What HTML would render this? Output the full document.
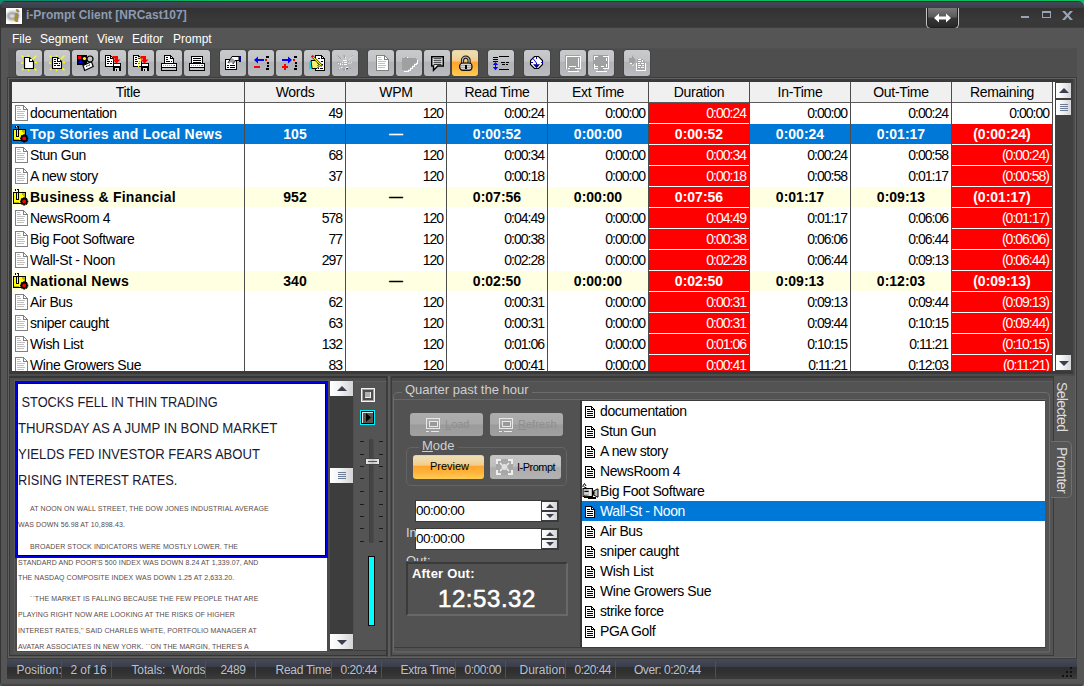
<!DOCTYPE html>
<html><head><meta charset="utf-8">
<style>
*{box-sizing:border-box;margin:0;padding:0}
html,body{width:1084px;height:686px;overflow:hidden;background:linear-gradient(90deg,#0e8a6a 0,#0e8a6a 8%,#0abf5e 20%,#0abf5e 100%);font-family:"Liberation Sans",sans-serif;font-size:13px}
.a{position:absolute}
i{font-style:normal}
#win{left:0;top:0;width:1084px;height:686px;background:#555;clip-path:inset(1px 0 0 0 round 6px 6px 4px 4px);overflow:hidden}
#tb{left:0;top:0;width:1084px;height:28px;background:linear-gradient(#2e2832 0,#2e2832 2px,#444856 2px,#3c3f4b 7.500px,#313131 8px,#393939 20px,#383838 27px,#484848 28px)}
#tbtxt{left:26px;top:8px;font-weight:bold;font-size:12px;color:#8c9bb4;white-space:nowrap}
#menu{left:7px;top:28px;width:1070px;height:20px;background:#555}
#menu span{position:absolute;top:4px;color:#fff;font-size:12px}
#tool{left:8px;top:48px;width:1069px;height:29px;background:linear-gradient(#525252 0,#4e4e4e 1px,#4e4e4e 100%)}
.btn{position:absolute;top:50px;width:26px;height:26px;border-radius:3px;box-shadow:0 0 0 1px #454545;background:linear-gradient(#c8cacc 0,#c2c3c6 42%,#b3b4b7 48%,#b6b7ba 75%,#bcbdc0 100%)}
.btn.dis{background:linear-gradient(#c8cacc 0,#c2c3c6 42%,#b3b4b7 48%,#b6b7ba 75%,#bcbdc0 100%)}
.btn.on{background:linear-gradient(#dccfa8 0,#eedcb2 6%,#f0d7a2 25%,#f3cb88 42%,#ffa52c 48%,#ffb238 70%,#ffcd58 100%)}
.btn svg{position:absolute;left:5px;top:5px}
/* table */
#tframe{left:9px;top:79px;width:1066px;height:295px;background:#3a3a3a}
#tbl{left:12px;top:82px;width:1041px;height:289px;overflow:hidden;background:#fff}
.th{top:0;height:20px;line-height:20px;text-align:center;color:#000;font-size:14px;letter-spacing:-.3px}
.tr{left:0;width:1041px;height:20px;color:#000;font-size:14px}
.tr.sel{color:#fff}
.tr.b{font-weight:bold}
.tr.b .tt{letter-spacing:.25px}
.tr.b .td{letter-spacing:0}
.tt{left:18px;top:0;line-height:20px;white-space:nowrap;letter-spacing:-.4px}
.td{top:0;height:20px;line-height:20px;text-align:right;padding-right:3px;white-space:nowrap;letter-spacing:-1px}
.tr.b .td{text-align:center;padding-right:0}
.td.red{background:#f00;color:#fff}
i.doc{position:absolute;left:3px;top:2px;width:13px;height:16px}
i.seg{position:absolute;left:1px;top:2px;width:16px;height:17px}
.big{left:1px;font-size:14px;line-height:18px;white-space:nowrap;color:#1a1a30;transform:scaleX(.935);transform-origin:0 0}
.sm{font-size:7px;line-height:10px;white-space:nowrap;color:#5a4a4a;letter-spacing:.1px}
.sbb{background:linear-gradient(90deg,#fff 0,#f4f4f4 40%,#d4d4d8 100%)}
.sbb i{position:absolute;left:50%;top:50%}
i.up{margin:-3px 0 0 -5px;border:5px solid transparent;border-top:0;border-bottom:5px solid #3a3f50}
i.dn{margin:-2px 0 0 -5px;border:5px solid transparent;border-bottom:0;border-top:5px solid #3a3f50}
i.up.s{margin:-2px 0 0 -4px;border-width:0 4px 4px 4px}
i.dn.s{margin:-2px 0 0 -4px;border-width:4px 4px 0 4px}
i.grip{margin:-4px 0 0 -4px;width:8px;height:7px;background:repeating-linear-gradient(#6c7c96 0,#6c7c96 1px,transparent 1px,transparent 2px)}
.gb{font-size:11px;border-radius:3px;background:linear-gradient(#c4c4c4 0,#bfbfbf 46%,#adadad 54%,#b3b3b3 100%);white-space:nowrap}
.gb.dis{background:linear-gradient(#adadad 0,#a9a9a9 46%,#9b9b9b 54%,#a0a0a0 100%)}
.gb.on{background:linear-gradient(#dccfa8 0,#eedcb2 6%,#f0d7a2 25%,#f3cb88 42%,#ffa52c 48%,#ffb238 70%,#ffcd58 100%)}
.vt{writing-mode:vertical-rl;color:#dcdcdc;font-size:14px;white-space:nowrap;line-height:16px}
#stat span{color:#b9c1cf;font-size:12px;white-space:nowrap}

</style></head><body>
<div id="win" class="a">
<div id="tb" class="a"></div>
<div class="a" style="left:0;top:0;width:1px;height:686px;background:#343434"></div>
<div class="a" style="left:6px;top:8px;width:16px;height:16px;background:radial-gradient(ellipse 7px 5px at 6px 8px,#e8e8e8 0,#a8a8a8 55%,#d0d0d0 100%),#fff;overflow:hidden;box-shadow:0 0 1px #222"><div class="a" style="left:0;top:0;width:16px;height:16px;background:radial-gradient(ellipse 9px 7px at 7px 8px,rgba(255,255,255,0) 55%,#fff 100%)"></div><span class="a" style="left:8px;top:-2px;font-family:'Liberation Serif',serif;font-weight:bold;font-style:italic;font-size:16px;line-height:20px;color:#a48c2c;text-shadow:1px 1px 1px #777">i</span></div>
<div id="tbtxt" class="a">i-Prompt Client [NRCast107]</div>
<div class="a" style="left:926px;top:8px;width:33px;height:21px;border:1px solid #c4c4c4;border-top:none;border-radius:0 0 5px 5px;background:#202020"><div class="a" style="left:1px;top:0;width:29px;height:19px;border-radius:0 0 3px 3px;background:linear-gradient(#787878 0,#5c5c5c 45%,#363636 55%,#282828 100%)"></div><svg class="a" style="left:7px;top:5px" width="17" height="10" viewBox="0 0 17 10"><path d="M0 5l5-4.500v3h7v-3l5 4.500-5 4.500v-3h-7v3z" fill="#fff"/></svg></div>
<div class="a" style="left:1021px;top:16px;width:8px;height:2px;background:#9aa3b4"></div>
<div class="a" style="left:1042px;top:11px;width:9px;height:7px;border:1px solid #9aa3b4;border-top-width:2px"></div>
<svg class="a" style="left:1062px;top:11px" width="11" height="9" viewBox="0 0 11 9"><path d="M0 0h3l2.500 3 2.500-3h3l-4 4.500 4 4.500h-3l-2.500-3-2.500 3h-3l4-4.500z" fill="#9aa3b4"/></svg>
<div id="menu" class="a"><span style="left:5px">File</span><span style="left:33px">Segment</span><span style="left:90px">View</span><span style="left:125px">Editor</span><span style="left:166px">Prompt</span></div>
<div id="tool" class="a"></div>

<div class="btn" style="left:16px"><svg width="17" height="17" viewBox="0 0 17 17" shape-rendering="crispEdges"><path d="M0.500 0.500l2.500 2.500M15.500 0.500l-4.500 4.500M1 15l2-2M15.500 15.500l-2.500-2.500M7 0l1 2M0 8h2.500M13.500 7.500h2.500M7 14l1 2" stroke="#ffff00" stroke-width="1.300" shape-rendering="geometricPrecision"/><path d="M3.500 2.500h5l4 4v7h-9z" fill="#fff" stroke="#000" stroke-width="1.200" shape-rendering="geometricPrecision"/><path d="M8.500 2.500v4h4" fill="none" stroke="#000"/><rect x="9" y="4" width="2" height="2" fill="#fff"/></svg></div>
<div class="btn" style="left:44px"><svg width="17" height="17" viewBox="0 0 17 17" shape-rendering="crispEdges"><path d="M0.500 0.500l2.500 2.500M15.500 0.500l-4.500 4.500M1 15l2-2M15.500 15.500l-2.500-2.500M7 0l1 2M0 8h2.500M13.500 7.500h2.500M7 14l1 2" stroke="#ffff00" stroke-width="1.300" shape-rendering="geometricPrecision"/><path d="M3.500 2.500h5l4 4v7h-9z" fill="#fff" stroke="#000" stroke-width="1.200" shape-rendering="geometricPrecision"/><path d="M8.500 2.500v4h4" fill="none" stroke="#000"/><rect x="9" y="4" width="2" height="2" fill="#fff"/><path d="M5 4.500h2M5 6.500h2M5 8.500h4M10 8.500h1M5 10.500h2M8 10.500h3" stroke="#000"/></svg></div>
<div class="btn" style="left:72px"><svg width="17" height="17" viewBox="0 0 17 17" shape-rendering="crispEdges"><rect x="0" y="0" width="10" height="10" fill="#000"/><rect x="1" y="1" width="3" height="3" fill="#f00"/><circle cx="7.500" cy="3.500" r="1.600" fill="#ff0" shape-rendering="geometricPrecision"/><path d="M1 8l2.500-3 2.500 3z" fill="#00f" shape-rendering="geometricPrecision"/><circle cx="13" cy="4" r="3" fill="none" stroke="#000" stroke-width="1.200" shape-rendering="geometricPrecision"/><path d="M6 10.500l8.500-3.700 1.700 4.700-8.500 4z" fill="#fff" stroke="#000" stroke-width="1.200" shape-rendering="geometricPrecision"/><path d="M9 11.500l1.500-.7M11.500 10.500l1.500-.7" stroke="#000" shape-rendering="geometricPrecision"/></svg></div>
<div class="btn" style="left:100px"><svg width="17" height="17" viewBox="0 0 17 17" shape-rendering="crispEdges"><path d="M0.500 0.500h5l3 3v8h-8z" fill="#fff" stroke="#000" stroke-width="1.200"/><path d="M5.500 0.500v3h3" fill="none" stroke="#000"/><path d="M2 2.500h2M2 4.500h2M2 6.500h3M6 6.500h1M2 8.500h2M5 8.500h2" stroke="#000"/><path d="M7.500 1h5.500v3.500h2.500l-4 4-4-4h2.500v-1h-2.500z" fill="#f00" shape-rendering="geometricPrecision"/><rect x="8" y="8" width="8" height="8" fill="#000"/><rect x="9" y="8" width="6" height="1" fill="#00f"/><rect x="9" y="9" width="6" height="2" fill="#fff"/><rect x="10" y="13" width="4" height="3" fill="#ddd"/><rect x="11" y="14" width="1" height="2" fill="#000"/></svg></div>
<div class="btn" style="left:128px"><svg width="17" height="17" viewBox="0 0 17 17" shape-rendering="crispEdges"><path d="M0.500 0.500h5l3 3v8h-8z" fill="#fff" stroke="#000" stroke-width="1.200"/><path d="M5.500 0.500v3h3" fill="none" stroke="#000"/><path d="M2 2.500h2M2 4.500h2M2 6.500h3M6 6.500h1M2 8.500h2M5 8.500h2" stroke="#000"/><path d="M4 3.500q2.500-2 4 0t-2 4v2" fill="none" stroke="#ff0" stroke-width="1.200" shape-rendering="geometricPrecision"/><rect x="5" y="11" width="1" height="1" fill="#ff0"/><path d="M7.500 1h5.500v3.500h2.500l-4 4-4-4h2.500v-1h-2.500z" fill="#f00" shape-rendering="geometricPrecision"/><rect x="8" y="8" width="8" height="8" fill="#000"/><rect x="9" y="8" width="6" height="1" fill="#00f"/><rect x="9" y="9" width="6" height="2" fill="#fff"/><rect x="10" y="13" width="4" height="3" fill="#ddd"/><rect x="11" y="14" width="1" height="2" fill="#000"/></svg></div>
<div class="btn" style="left:156px"><svg width="17" height="17" viewBox="0 0 17 17" shape-rendering="crispEdges"><path d="M3.500 0.500h6l3 3v5h-9z" fill="#fff" stroke="#000" stroke-width="1.200"/><path d="M9.500 0.500v3h3" fill="none" stroke="#000"/><path d="M5 2.500h2M5 4.500h2M5 6.500h4M10 6.500h1" stroke="#000"/><rect x="0.500" y="8.500" width="15" height="7" fill="#fff" stroke="#000"/><rect x="1" y="9" width="14" height="3" fill="#fff"/><path d="M1.500 10.500h11" stroke="#999" stroke-dasharray="1 1"/><rect x="13" y="10" width="1" height="1" fill="#f00"/><path d="M1 12.500h14" stroke="#000"/><rect x="1" y="13" width="14" height="2" fill="#c8c8c8"/></svg></div>
<div class="btn" style="left:184px"><svg width="17" height="17" viewBox="0 0 17 17" shape-rendering="crispEdges"><path d="M2.500 1.500h11v7h-11z" fill="#fff" stroke="#000" stroke-width="1.200"/><path d="M4 3.500h8M4 5.500h8" stroke="#000"/><path d="M4 7.500h8" stroke="#000"/><rect x="0.500" y="8.500" width="15" height="7" fill="#fff" stroke="#000"/><rect x="1" y="9" width="14" height="3" fill="#fff"/><path d="M1.500 10.500h11" stroke="#999" stroke-dasharray="1 1"/><rect x="13" y="10" width="1" height="1" fill="#f00"/><path d="M1 12.500h14" stroke="#000"/><rect x="1" y="13" width="14" height="2" fill="#c8c8c8"/></svg></div>
<div class="btn" style="left:220px"><svg width="17" height="17" viewBox="0 0 17 17" shape-rendering="crispEdges"><path d="M0.500 4.500h11v10h-11z" fill="#fff" stroke="#000" stroke-width="1.300"/><path d="M2 10.500h2M5 10.500h5M2 12.500h2M5 12.500h5" stroke="#000"/><path d="M3 8l4-6.500h7v4h-4l-2 3.500" fill="#fff" stroke="#000" shape-rendering="geometricPrecision"/><path d="M3 8l4-5 4 3.500-3 2.500-2-2-1.500 1.500z" fill="#777" opacity=".75" shape-rendering="geometricPrecision"/><rect x="14" y="1" width="2" height="6" fill="#00008b"/></svg></div>
<div class="btn" style="left:248px"><svg width="17" height="17" viewBox="0 0 17 17" shape-rendering="crispEdges"><rect x="3" y="4" width="8" height="2" fill="#00f"/><path d="M5 1.500l-4 3.500 4 3.500z" fill="#00f" shape-rendering="geometricPrecision"/><rect x="1" y="11" width="6" height="2" fill="#f00"/><rect x="12" y="4" width="2" height="2" fill="#f00"/><rect x="13" y="1" width="3" height="2" fill="#000"/><rect x="14" y="7" width="2" height="2" fill="#000"/><rect x="14" y="10" width="2" height="2" fill="#000"/><rect x="13" y="13" width="3" height="2" fill="#000"/></svg></div>
<div class="btn" style="left:276px"><svg width="17" height="17" viewBox="0 0 17 17" shape-rendering="crispEdges"><rect x="1" y="4" width="8" height="2" fill="#00f"/><path d="M7 1.500l4 3.500-4 3.500z" fill="#00f" shape-rendering="geometricPrecision"/><rect x="1" y="11" width="6" height="2" fill="#f00"/><rect x="3" y="9" width="2" height="6" fill="#f00"/><rect x="12" y="4" width="2" height="2" fill="#f00"/><rect x="13" y="1" width="3" height="2" fill="#000"/><rect x="14" y="7" width="2" height="2" fill="#000"/><rect x="14" y="10" width="2" height="2" fill="#000"/><rect x="13" y="13" width="3" height="2" fill="#000"/></svg></div>
<div class="btn" style="left:304px"><svg width="17" height="17" viewBox="0 0 17 17" shape-rendering="crispEdges"><path d="M6.500 0.500h6l3 3v12h-9z" fill="#fff" stroke="#000" stroke-width="1.300"/><path d="M12.500 0.500v3h3" fill="none" stroke="#000"/><path d="M9 3.500h2M12 6.500h2M12 9.500h2M9 13.500h1M11 13.500h3" stroke="#000"/><path d="M2 5.500h6l2 2-1 1 1 1-1 1 1 1-2 2h-5z" fill="#f4f46a" stroke="#000" shape-rendering="geometricPrecision"/><path d="M3 1l10 10" stroke="#000" stroke-width="2.400" shape-rendering="geometricPrecision"/><path d="M3.500 1.500l9 9" stroke="#ff0" stroke-width="1.100" shape-rendering="geometricPrecision"/><path d="M2.800 .8l1.200 1.200" stroke="#f00" stroke-width="1.600" shape-rendering="geometricPrecision"/><rect x="0" y="7" width="2" height="7" fill="#00e0e8"/></svg></div>
<div class="btn dis" style="left:332px"><svg width="17" height="17" viewBox="0 0 17 17" shape-rendering="crispEdges"><g stroke="#999" shape-rendering="geometricPrecision"><path d="M0.500 0.500l3.500 3.500M15.500 0.500l-5 5M1 15l3-3M15.500 15.500l-3-3M7 0l.5 3M0 8h3M7 13v3"/></g><g stroke="#f6f6f6" shape-rendering="geometricPrecision"><path d="M11.500 5l3.500-3.500M8.500 2v1.500M2 14l2-1.500h1.500M9 15.500v-3h2.500M14 14.500l.8 .8M11.500 8.500l2-.5 1.500-1"/></g><path d="M6 5.500h4M3 7.500v2M5 7.500h1M7 7.500h3M5 9.500h1M7 9.500h3M1 8.500h1" stroke="#fbfbfb"/></svg></div>
<div class="btn dis" style="left:368px"><svg width="17" height="17" viewBox="0 0 17 17" shape-rendering="crispEdges"><path d="M3.500 0.500h8l4 4v11h-12z" fill="#fff" stroke="#808080"/><path d="M11.500 0.500v4h4" fill="none" stroke="#808080"/><path d="M5 2.500h3M5 4.500h4M5 6.500h8M5 8.500h7M5 10.500h8M5 12.500h7" stroke="#c0c0c0"/></svg></div>
<div class="btn dis" style="left:396px"><svg width="17" height="17" viewBox="0 0 17 17" shape-rendering="crispEdges"><path d="M1 3h3l1-2 1 2h7l3 1v3h-1v1h-2v2h-2v2h-2v2h-2v1h-6z" fill="#a0a0a0"/><path d="M16 5v3h-1v1h-2v2h-2v2h-2v2h-2v1h-4" fill="none" stroke="#fff" stroke-width="1"/><rect x="6" y="2" width="1" height="1" fill="#fff"/></svg></div>
<div class="btn" style="left:424px"><svg width="17" height="17" viewBox="0 0 17 17" shape-rendering="crispEdges"><g shape-rendering="geometricPrecision"><path d="M2.750 1.750h11.500v9.250h-5.500l-4.200 4.200v-4.200h-1.800z" fill="#fff" stroke="#000" stroke-width="1.500"/><path d="M4.500 3.750h8M4.500 5.750h8M4.500 7.750h8M4.500 9.600h8" stroke="#000" stroke-width=".9"/></g></svg></div>
<div class="btn on" style="left:452px"><svg width="17" height="17" viewBox="0 0 17 17" shape-rendering="crispEdges"><g shape-rendering="geometricPrecision"><path d="M5.500 8.500v-3a3.300 3.300 0 0 1 6.600 0v3" fill="none" stroke="#111" stroke-width="3.200"/><path d="M5.500 8.500v-3a3.300 3.300 0 0 1 6.600 0v3" fill="none" stroke="#b0b0b0" stroke-width="1.300"/><rect x="2.600" y="8" width="12.400" height="7.400" rx="3.400" fill="#a8a8a8" stroke="#111" stroke-width="1.200"/></g><path d="M4 9.500h9.500M3.500 11.500h10.500M4 13.500h9.500" stroke="#d8d8d8"/><rect x="7.500" y="10" width="2.500" height="2" fill="#000"/><rect x="8" y="11" width="1.500" height="3" fill="#000"/></svg></div>
<div class="btn" style="left:488px"><svg width="17" height="17" viewBox="0 0 17 17" shape-rendering="crispEdges"><path d="M6 1.500h10M6 14.500h10" stroke="#000"/><path d="M0 2.500h5M0 4.500h5M0 6.500h5" stroke="#000"/><path d="M8 7.500h4M13 7.500h3M9 9.500h3M13 9.500h2" stroke="#000"/><rect x="2" y="9" width="1" height="4" fill="#00f"/><path d="M2.500 7l2.700 3h-5.400zM2.500 15.200l2.700-3.200h-5.400z" fill="#00f" shape-rendering="geometricPrecision"/></svg></div>
<div class="btn" style="left:524px"><svg width="17" height="17" viewBox="0 0 17 17" shape-rendering="crispEdges"><path d="M5.500 1.500h4l4 4v4l-4 4h-4l-4-4v-4z" fill="#fffffa" stroke="#000" stroke-width="1.100" shape-rendering="geometricPrecision"/><path d="M7.500 2v2M2 7.500h1.500M12 7.500h1.500" stroke="#00f"/><path d="M4 3.500l3.500 4.500v1.500" fill="none" stroke="#00f" shape-rendering="geometricPrecision"/><path d="M4 9.200h7l-3.500 4z" fill="#00008b" shape-rendering="geometricPrecision"/></svg></div>
<div class="btn dis" style="left:560px"><svg width="17" height="17" viewBox="0 0 17 17" shape-rendering="crispEdges"><rect x="0" y="0" width="15" height="14" fill="#a0a0a0"/><path d="M1 1.500h14M1.500 1v12M15.500 1v13M13.500 3v9M4 11.500h7M10 13.500h6M1 13.500h1M3 13.500h2" stroke="#fff"/><rect x="4" y="14" width="8" height="2" fill="#a0a0a0"/><path d="M3 16.500h11" stroke="#fff"/></svg></div>
<div class="btn dis" style="left:588px"><svg width="17" height="17" viewBox="0 0 17 17" shape-rendering="crispEdges"><rect x="0" y="0" width="15" height="14" fill="#a0a0a0"/><path d="M1 1.500h4M10 1.500h5M1.500 1v4M1.500 9v4M15.500 1v13M13.500 3v3M13.500 9v3M2 11.500h3M8 11.500h3M10 13.500h6M1 13.500h4" stroke="#fff"/><rect x="5" y="14" width="6" height="2" fill="#a0a0a0"/><path d="M3 16.500h11" stroke="#fff"/></svg></div>
<div class="btn dis" style="left:624px"><svg width="17" height="17" viewBox="0 0 17 17" shape-rendering="crispEdges"><path d="M0 3h3v-3l4 5.500-4 5v-3h-3z" fill="#a0a0a0" shape-rendering="geometricPrecision"/><path d="M1 8.500h2M3.500 11l1.200-1.500" stroke="#fff" shape-rendering="geometricPrecision"/><path d="M8 4h5l3 3v8h-8z" fill="#a6a6a6"/><path d="M9 4.500h3M9 6.500h3M13 5v2M9 8.500h2M12 8.500h3M9 10.500h3M13 10.500h2M9 12.500h2M12 12.500h3" stroke="#fff"/><path d="M7.500 8v7.500h9.500M16.500 8v7" fill="none" stroke="#fff"/></svg></div>
<div class="a" id="tframe"></div>
<div class="a" id="tbl">
<div class="a" style="left:0;top:0;width:1041px;height:20px;background:#f0f0f0"></div>
<div class="a" style="left:0;top:20px;width:1041px;height:1px;background:#5a5a5a"></div>
<div class="a th" style="left:0px;width:232px">Title</div>
<div class="a th" style="left:233px;width:100px">Words</div>
<div class="a th" style="left:334px;width:100px">WPM</div>
<div class="a th" style="left:435px;width:100px">Read Time</div>
<div class="a th" style="left:536px;width:100px">Ext Time</div>
<div class="a th" style="left:637px;width:100px">Duration</div>
<div class="a th" style="left:738px;width:100px">In-Time</div>
<div class="a th" style="left:839px;width:100px">Out-Time</div>
<div class="a th" style="left:940px;width:100px">Remaining</div>
<div class="a tr" style="top:21px;background:#fff">
<i class="doc"><svg width="13" height="16" viewBox="0 0 13 16" shape-rendering="crispEdges"><path d="M0.500 0.500h8l4 4v11h-12z" fill="#fff" stroke="#808080"/><path d="M8.500 0.500v4h4" fill="none" stroke="#808080"/><path d="M2 2.500h3M2 4.500h4M2 6.500h8M2 8.500h7M2 10.500h8M2 12.500h7" stroke="#c0c0c0"/></svg></i><span class="a tt">documentation</span>
<span class="a td" style="left:233px;width:100px">49</span>
<span class="a td" style="left:334px;width:100px">120</span>
<span class="a td" style="left:435px;width:100px">0:00:24</span>
<span class="a td" style="left:536px;width:100px">0:00:00</span>
<span class="a td red" style="left:637px;width:100px">0:00:24</span>
<span class="a td" style="left:738px;width:100px">0:00:00</span>
<span class="a td" style="left:839px;width:100px">0:00:24</span>
<span class="a td" style="left:940px;width:100px">0:00:00</span>
</div>
<div class="a tr b sel" style="top:42px;background:#0078d7">
<i class="seg"><svg width="17" height="17" viewBox="0 0 17 17" shape-rendering="crispEdges"><path d="M0.500 3.500h12v11h-12z" fill="#ffff00" stroke="#000"/><path d="M1 13h5v1h-5zM9 4h3v4h-1v-1h-1v-1h-1z" fill="#b8b800"/><path d="M2.500 2v-1l1-1h1l1 1v9h-2v-6" fill="none" stroke="#000"/><path d="M3 0.500h1" stroke="#fff"/><g shape-rendering="geometricPrecision"><circle cx="11.200" cy="12.400" r="3.300" fill="#000"/><path d="M11.200 8.300v8.200M7.100 12.400h8.200M8.300 9.500l5.800 5.800M14.100 9.500l-5.800 5.800" stroke="#000" stroke-width="2"/><circle cx="11.200" cy="12.400" r="1.900" fill="#f00"/></g></svg></i><span class="a tt">Top Stories and Local News</span>
<span class="a td" style="left:233px;width:100px">105</span>
<span class="a td" style="left:334px;width:100px">—</span>
<span class="a td" style="left:435px;width:100px">0:00:52</span>
<span class="a td" style="left:536px;width:100px">0:00:00</span>
<span class="a td red" style="left:637px;width:100px">0:00:52</span>
<span class="a td" style="left:738px;width:100px">0:00:24</span>
<span class="a td" style="left:839px;width:100px">0:01:17</span>
<span class="a td red" style="left:940px;width:100px">(0:00:24)</span>
</div>
<div class="a tr" style="top:63px;background:#fff">
<i class="doc"><svg width="13" height="16" viewBox="0 0 13 16" shape-rendering="crispEdges"><path d="M0.500 0.500h8l4 4v11h-12z" fill="#fff" stroke="#808080"/><path d="M8.500 0.500v4h4" fill="none" stroke="#808080"/><path d="M2 2.500h3M2 4.500h4M2 6.500h8M2 8.500h7M2 10.500h8M2 12.500h7" stroke="#c0c0c0"/></svg></i><span class="a tt">Stun Gun</span>
<span class="a td" style="left:233px;width:100px">68</span>
<span class="a td" style="left:334px;width:100px">120</span>
<span class="a td" style="left:435px;width:100px">0:00:34</span>
<span class="a td" style="left:536px;width:100px">0:00:00</span>
<span class="a td red" style="left:637px;width:100px">0:00:34</span>
<span class="a td" style="left:738px;width:100px">0:00:24</span>
<span class="a td" style="left:839px;width:100px">0:00:58</span>
<span class="a td red" style="left:940px;width:100px">(0:00:24)</span>
</div>
<div class="a tr" style="top:84px;background:#fff">
<i class="doc"><svg width="13" height="16" viewBox="0 0 13 16" shape-rendering="crispEdges"><path d="M0.500 0.500h8l4 4v11h-12z" fill="#fff" stroke="#808080"/><path d="M8.500 0.500v4h4" fill="none" stroke="#808080"/><path d="M2 2.500h3M2 4.500h4M2 6.500h8M2 8.500h7M2 10.500h8M2 12.500h7" stroke="#c0c0c0"/></svg></i><span class="a tt">A new story</span>
<span class="a td" style="left:233px;width:100px">37</span>
<span class="a td" style="left:334px;width:100px">120</span>
<span class="a td" style="left:435px;width:100px">0:00:18</span>
<span class="a td" style="left:536px;width:100px">0:00:00</span>
<span class="a td red" style="left:637px;width:100px">0:00:18</span>
<span class="a td" style="left:738px;width:100px">0:00:58</span>
<span class="a td" style="left:839px;width:100px">0:01:17</span>
<span class="a td red" style="left:940px;width:100px">(0:00:58)</span>
</div>
<div class="a tr b" style="top:105px;background:#ffffe1">
<i class="seg"><svg width="17" height="17" viewBox="0 0 17 17" shape-rendering="crispEdges"><path d="M0.500 3.500h12v11h-12z" fill="#ffff00" stroke="#000"/><path d="M1 13h5v1h-5zM9 4h3v4h-1v-1h-1v-1h-1z" fill="#b8b800"/><path d="M2.500 2v-1l1-1h1l1 1v9h-2v-6" fill="none" stroke="#000"/><path d="M3 0.500h1" stroke="#fff"/><g shape-rendering="geometricPrecision"><circle cx="11.200" cy="12.400" r="3.300" fill="#000"/><path d="M11.200 8.300v8.200M7.100 12.400h8.200M8.300 9.500l5.800 5.800M14.100 9.500l-5.800 5.800" stroke="#000" stroke-width="2"/><circle cx="11.200" cy="12.400" r="1.900" fill="#f00"/></g></svg></i><span class="a tt">Business &amp; Financial</span>
<span class="a td" style="left:233px;width:100px">952</span>
<span class="a td" style="left:334px;width:100px">—</span>
<span class="a td" style="left:435px;width:100px">0:07:56</span>
<span class="a td" style="left:536px;width:100px">0:00:00</span>
<span class="a td red" style="left:637px;width:100px">0:07:56</span>
<span class="a td" style="left:738px;width:100px">0:01:17</span>
<span class="a td" style="left:839px;width:100px">0:09:13</span>
<span class="a td red" style="left:940px;width:100px">(0:01:17)</span>
</div>
<div class="a tr" style="top:126px;background:#fff">
<i class="doc"><svg width="13" height="16" viewBox="0 0 13 16" shape-rendering="crispEdges"><path d="M0.500 0.500h8l4 4v11h-12z" fill="#fff" stroke="#808080"/><path d="M8.500 0.500v4h4" fill="none" stroke="#808080"/><path d="M2 2.500h3M2 4.500h4M2 6.500h8M2 8.500h7M2 10.500h8M2 12.500h7" stroke="#c0c0c0"/></svg></i><span class="a tt">NewsRoom 4</span>
<span class="a td" style="left:233px;width:100px">578</span>
<span class="a td" style="left:334px;width:100px">120</span>
<span class="a td" style="left:435px;width:100px">0:04:49</span>
<span class="a td" style="left:536px;width:100px">0:00:00</span>
<span class="a td red" style="left:637px;width:100px">0:04:49</span>
<span class="a td" style="left:738px;width:100px">0:01:17</span>
<span class="a td" style="left:839px;width:100px">0:06:06</span>
<span class="a td red" style="left:940px;width:100px">(0:01:17)</span>
</div>
<div class="a tr" style="top:147px;background:#fff">
<i class="doc"><svg width="13" height="16" viewBox="0 0 13 16" shape-rendering="crispEdges"><path d="M0.500 0.500h8l4 4v11h-12z" fill="#fff" stroke="#808080"/><path d="M8.500 0.500v4h4" fill="none" stroke="#808080"/><path d="M2 2.500h3M2 4.500h4M2 6.500h8M2 8.500h7M2 10.500h8M2 12.500h7" stroke="#c0c0c0"/></svg></i><span class="a tt">Big Foot Software</span>
<span class="a td" style="left:233px;width:100px">77</span>
<span class="a td" style="left:334px;width:100px">120</span>
<span class="a td" style="left:435px;width:100px">0:00:38</span>
<span class="a td" style="left:536px;width:100px">0:00:00</span>
<span class="a td red" style="left:637px;width:100px">0:00:38</span>
<span class="a td" style="left:738px;width:100px">0:06:06</span>
<span class="a td" style="left:839px;width:100px">0:06:44</span>
<span class="a td red" style="left:940px;width:100px">(0:06:06)</span>
</div>
<div class="a tr" style="top:168px;background:#fff">
<i class="doc"><svg width="13" height="16" viewBox="0 0 13 16" shape-rendering="crispEdges"><path d="M0.500 0.500h8l4 4v11h-12z" fill="#fff" stroke="#808080"/><path d="M8.500 0.500v4h4" fill="none" stroke="#808080"/><path d="M2 2.500h3M2 4.500h4M2 6.500h8M2 8.500h7M2 10.500h8M2 12.500h7" stroke="#c0c0c0"/></svg></i><span class="a tt">Wall-St - Noon</span>
<span class="a td" style="left:233px;width:100px">297</span>
<span class="a td" style="left:334px;width:100px">120</span>
<span class="a td" style="left:435px;width:100px">0:02:28</span>
<span class="a td" style="left:536px;width:100px">0:00:00</span>
<span class="a td red" style="left:637px;width:100px">0:02:28</span>
<span class="a td" style="left:738px;width:100px">0:06:44</span>
<span class="a td" style="left:839px;width:100px">0:09:13</span>
<span class="a td red" style="left:940px;width:100px">(0:06:44)</span>
</div>
<div class="a tr b" style="top:189px;background:#ffffe1">
<i class="seg"><svg width="17" height="17" viewBox="0 0 17 17" shape-rendering="crispEdges"><path d="M0.500 3.500h12v11h-12z" fill="#ffff00" stroke="#000"/><path d="M1 13h5v1h-5zM9 4h3v4h-1v-1h-1v-1h-1z" fill="#b8b800"/><path d="M2.500 2v-1l1-1h1l1 1v9h-2v-6" fill="none" stroke="#000"/><path d="M3 0.500h1" stroke="#fff"/><g shape-rendering="geometricPrecision"><circle cx="11.200" cy="12.400" r="3.300" fill="#000"/><path d="M11.200 8.300v8.200M7.100 12.400h8.200M8.300 9.500l5.800 5.800M14.100 9.500l-5.800 5.800" stroke="#000" stroke-width="2"/><circle cx="11.200" cy="12.400" r="1.900" fill="#f00"/></g></svg></i><span class="a tt">National News</span>
<span class="a td" style="left:233px;width:100px">340</span>
<span class="a td" style="left:334px;width:100px">—</span>
<span class="a td" style="left:435px;width:100px">0:02:50</span>
<span class="a td" style="left:536px;width:100px">0:00:00</span>
<span class="a td red" style="left:637px;width:100px">0:02:50</span>
<span class="a td" style="left:738px;width:100px">0:09:13</span>
<span class="a td" style="left:839px;width:100px">0:12:03</span>
<span class="a td red" style="left:940px;width:100px">(0:09:13)</span>
</div>
<div class="a tr" style="top:210px;background:#fff">
<i class="doc"><svg width="13" height="16" viewBox="0 0 13 16" shape-rendering="crispEdges"><path d="M0.500 0.500h8l4 4v11h-12z" fill="#fff" stroke="#808080"/><path d="M8.500 0.500v4h4" fill="none" stroke="#808080"/><path d="M2 2.500h3M2 4.500h4M2 6.500h8M2 8.500h7M2 10.500h8M2 12.500h7" stroke="#c0c0c0"/></svg></i><span class="a tt">Air Bus</span>
<span class="a td" style="left:233px;width:100px">62</span>
<span class="a td" style="left:334px;width:100px">120</span>
<span class="a td" style="left:435px;width:100px">0:00:31</span>
<span class="a td" style="left:536px;width:100px">0:00:00</span>
<span class="a td red" style="left:637px;width:100px">0:00:31</span>
<span class="a td" style="left:738px;width:100px">0:09:13</span>
<span class="a td" style="left:839px;width:100px">0:09:44</span>
<span class="a td red" style="left:940px;width:100px">(0:09:13)</span>
</div>
<div class="a tr" style="top:231px;background:#fff">
<i class="doc"><svg width="13" height="16" viewBox="0 0 13 16" shape-rendering="crispEdges"><path d="M0.500 0.500h8l4 4v11h-12z" fill="#fff" stroke="#808080"/><path d="M8.500 0.500v4h4" fill="none" stroke="#808080"/><path d="M2 2.500h3M2 4.500h4M2 6.500h8M2 8.500h7M2 10.500h8M2 12.500h7" stroke="#c0c0c0"/></svg></i><span class="a tt">sniper caught</span>
<span class="a td" style="left:233px;width:100px">63</span>
<span class="a td" style="left:334px;width:100px">120</span>
<span class="a td" style="left:435px;width:100px">0:00:31</span>
<span class="a td" style="left:536px;width:100px">0:00:00</span>
<span class="a td red" style="left:637px;width:100px">0:00:31</span>
<span class="a td" style="left:738px;width:100px">0:09:44</span>
<span class="a td" style="left:839px;width:100px">0:10:15</span>
<span class="a td red" style="left:940px;width:100px">(0:09:44)</span>
</div>
<div class="a tr" style="top:252px;background:#fff">
<i class="doc"><svg width="13" height="16" viewBox="0 0 13 16" shape-rendering="crispEdges"><path d="M0.500 0.500h8l4 4v11h-12z" fill="#fff" stroke="#808080"/><path d="M8.500 0.500v4h4" fill="none" stroke="#808080"/><path d="M2 2.500h3M2 4.500h4M2 6.500h8M2 8.500h7M2 10.500h8M2 12.500h7" stroke="#c0c0c0"/></svg></i><span class="a tt">Wish List</span>
<span class="a td" style="left:233px;width:100px">132</span>
<span class="a td" style="left:334px;width:100px">120</span>
<span class="a td" style="left:435px;width:100px">0:01:06</span>
<span class="a td" style="left:536px;width:100px">0:00:00</span>
<span class="a td red" style="left:637px;width:100px">0:01:06</span>
<span class="a td" style="left:738px;width:100px">0:10:15</span>
<span class="a td" style="left:839px;width:100px">0:11:21</span>
<span class="a td red" style="left:940px;width:100px">(0:10:15)</span>
</div>
<div class="a tr" style="top:273px;background:#fff">
<i class="doc"><svg width="13" height="16" viewBox="0 0 13 16" shape-rendering="crispEdges"><path d="M0.500 0.500h8l4 4v11h-12z" fill="#fff" stroke="#808080"/><path d="M8.500 0.500v4h4" fill="none" stroke="#808080"/><path d="M2 2.500h3M2 4.500h4M2 6.500h8M2 8.500h7M2 10.500h8M2 12.500h7" stroke="#c0c0c0"/></svg></i><span class="a tt">Wine Growers Sue</span>
<span class="a td" style="left:233px;width:100px">83</span>
<span class="a td" style="left:334px;width:100px">120</span>
<span class="a td" style="left:435px;width:100px">0:00:41</span>
<span class="a td" style="left:536px;width:100px">0:00:00</span>
<span class="a td red" style="left:637px;width:100px">0:00:41</span>
<span class="a td" style="left:738px;width:100px">0:11:21</span>
<span class="a td" style="left:839px;width:100px">0:12:03</span>
<span class="a td red" style="left:940px;width:100px">(0:11:21)</span>
</div>
<div class="a" style="left:232px;top:0;width:1px;height:290px;background:#4c4c4c"></div>
<div class="a" style="left:333px;top:0;width:1px;height:290px;background:#4c4c4c"></div>
<div class="a" style="left:434px;top:0;width:1px;height:290px;background:#4c4c4c"></div>
<div class="a" style="left:535px;top:0;width:1px;height:290px;background:#4c4c4c"></div>
<div class="a" style="left:636px;top:0;width:1px;height:290px;background:#4c4c4c"></div>
<div class="a" style="left:737px;top:0;width:1px;height:290px;background:#4c4c4c"></div>
<div class="a" style="left:838px;top:0;width:1px;height:290px;background:#4c4c4c"></div>
<div class="a" style="left:939px;top:0;width:1px;height:290px;background:#4c4c4c"></div>
</div>
<div class="a" style="left:1052px;top:82px;width:1px;height:289px;background:#4c4c4c"></div>
<div class="a" style="left:1053px;top:82px;width:2px;height:289px;background:#fff"></div>
<div class="a" style="left:1055px;top:82px;width:18px;height:289px;background:#404040"></div>
<div class="a" style="left:1073px;top:79px;width:2px;height:295px;background:#4a4a4a"></div>
<div class="a sbb" style="left:1056px;top:83px;width:15px;height:15px"><i class="up"></i></div>
<div class="a sbb" style="left:1056px;top:100px;width:15px;height:15px"><i class="grip"></i></div>
<div class="a sbb" style="left:1056px;top:355px;width:15px;height:15px"><i class="dn"></i></div>

<div class="a" style="left:9px;top:374px;width:1066px;height:2px;background:#4c4c4c"></div>
<div class="a" style="left:9px;top:376px;width:378px;height:280px;background:#4e4e4e;border:1px solid #363636;border-top-width:2px"></div>
<div class="a" style="left:14px;top:380px;width:316px;height:273px;border:1px solid #5a5a5a;border-right:none;background:#4a4a4a"></div>
<div class="a" id="txt" style="left:17px;top:383px;width:310px;height:268px;background:#fff;overflow:hidden">
<div class="a big" style="top:10px;transform:scaleX(0.9126)">&nbsp;STOCKS FELL IN THIN TRADING</div>
<div class="a big" style="top:36px;transform:scaleX(0.9415)">THURSDAY AS A JUMP IN BOND MARKET</div>
<div class="a big" style="top:62px;transform:scaleX(0.9350)">YIELDS FED INVESTOR FEARS ABOUT</div>
<div class="a big" style="top:88px;transform:scaleX(0.9135)">RISING INTEREST RATES.</div>
<div class="a sm" style="top:121px;left:13px">AT NOON ON WALL STREET, THE DOW JONES INDUSTRIAL AVERAGE</div>
<div class="a sm" style="top:137px;left:1px">WAS DOWN 56.98 AT 10,898.43.</div>
<div class="a sm" style="top:159px;left:13px">BROADER STOCK INDICATORS WERE MOSTLY LOWER. THE</div>
<div class="a sm" style="top:175px;left:1px">STANDARD AND POOR&#x27;S 500 INDEX WAS DOWN 8.24 AT 1,339.07, AND</div>
<div class="a sm" style="top:190px;left:1px">THE NASDAQ COMPOSITE INDEX WAS DOWN 1.25 AT 2,633.20.</div>
<div class="a sm" style="top:211px;left:13px">``THE MARKET IS FALLING BECAUSE THE FEW PEOPLE THAT ARE</div>
<div class="a sm" style="top:227px;left:1px">PLAYING RIGHT NOW ARE LOOKING AT THE RISKS OF HIGHER</div>
<div class="a sm" style="top:243px;left:1px">INTEREST RATES,&#x27;&#x27; SAID CHARLES WHITE, PORTFOLIO MANAGER AT</div>
<div class="a sm" style="top:259px;left:1px">AVATAR ASSOCIATES IN NEW YORK. ``ON THE MARGIN, THERE&#x27;S A</div>
</div>
<div class="a" style="left:15px;top:381px;width:313px;height:177px;border:2px solid #0000e8"></div>
<div class="a" style="left:17px;top:383px;width:309px;height:173px;border:1px solid #000"></div>
<div class="a" style="left:330px;top:381px;width:23px;height:270px;background:#3d3d3d"></div>
<div class="a sbb" style="left:330px;top:381px;width:23px;height:15px"><i class="up"></i></div>
<div class="a sbb" style="left:330px;top:468px;width:23px;height:15px"><i class="grip"></i></div>
<div class="a sbb" style="left:330px;top:634px;width:23px;height:15px"><i class="dn"></i></div>
<div class="a" style="left:354px;top:381px;width:33px;height:270px;background:#545454;border-top:1px solid #5e5e5e;border-bottom:1px solid #3c3c3c;border-right:1px solid #3c3c3c"></div>
<div class="a" style="left:361px;top:388px;width:14px;height:14px;border:1px solid #f4f4f4;box-shadow:inset 0 0 0 1px #a4a4a4;background:#4e4e4e"><div class="a" style="left:3px;top:3px;width:6px;height:6px;background:#b0b0b0;border-right:1px solid #eee;border-bottom:1px solid #eee"></div></div>
<div class="a" style="left:360px;top:410px;width:15px;height:15px;border:1px solid #00f0f8;background:#000"><div class="a" style="left:1px;top:1px;width:11px;height:11px;background:#575757;border-left:1px solid #e8e8e8;border-top:1px solid #e8e8e8"></div><svg class="a" style="left:4px;top:2px" width="6" height="9" viewBox="0 0 6 9"><path d="M1 0l5 4.500-5 4.500z" fill="#000"/></svg></div>
<div class="a" style="left:369px;top:439px;width:5px;height:104px;background:#444;border-radius:2px;border-left:1px solid #3e3e3e;border-right:1px solid #4a4a4a"></div>
<div class="a" style="left:360px;top:441px;width:4px;height:1px;background:#1c1c1c"></div><div class="a" style="left:379px;top:441px;width:4px;height:1px;background:#1c1c1c"></div>
<div class="a" style="left:360px;top:454px;width:4px;height:1px;background:#1c1c1c"></div><div class="a" style="left:379px;top:454px;width:4px;height:1px;background:#1c1c1c"></div>
<div class="a" style="left:360px;top:466px;width:4px;height:1px;background:#1c1c1c"></div><div class="a" style="left:379px;top:466px;width:4px;height:1px;background:#1c1c1c"></div>
<div class="a" style="left:360px;top:478px;width:4px;height:1px;background:#1c1c1c"></div><div class="a" style="left:379px;top:478px;width:4px;height:1px;background:#1c1c1c"></div>
<div class="a" style="left:360px;top:491px;width:4px;height:1px;background:#1c1c1c"></div><div class="a" style="left:379px;top:491px;width:4px;height:1px;background:#1c1c1c"></div>
<div class="a" style="left:360px;top:504px;width:4px;height:1px;background:#1c1c1c"></div><div class="a" style="left:379px;top:504px;width:4px;height:1px;background:#1c1c1c"></div>
<div class="a" style="left:360px;top:516px;width:4px;height:1px;background:#1c1c1c"></div><div class="a" style="left:379px;top:516px;width:4px;height:1px;background:#1c1c1c"></div>
<div class="a" style="left:360px;top:528px;width:4px;height:1px;background:#1c1c1c"></div><div class="a" style="left:379px;top:528px;width:4px;height:1px;background:#1c1c1c"></div>
<div class="a" style="left:360px;top:541px;width:4px;height:1px;background:#1c1c1c"></div><div class="a" style="left:379px;top:541px;width:4px;height:1px;background:#1c1c1c"></div>
<div class="a" style="left:365px;top:458px;width:15px;height:7px;background:linear-gradient(90deg,#eaeaea,#c4c4c4 50%,#eaeaea);border:1px solid #444;border-radius:1px"><div class="a" style="left:2px;top:2px;width:9px;height:1px;background:#555"></div></div>
<div class="a" style="left:368px;top:556px;width:7px;height:70px;background:#00ffff;border:1px solid #100808"></div>
<div class="a" style="left:387px;top:376px;width:1px;height:281px;background:#3c3c3c"></div>
<div class="a" style="left:388px;top:376px;width:2px;height:281px;background:#5c5c5c"></div>
<div class="a" style="left:390px;top:376px;width:1px;height:281px;background:#4a4a4a"></div>
<div class="a" style="left:391px;top:376px;width:663px;height:280px;background:#535353;border:1px solid #3a3a3a;border-top-width:2px"></div>
<div class="a" style="left:392px;top:378px;width:661px;height:3px;background:#4a4a4a"></div>
<div class="a" style="left:392px;top:381px;width:661px;height:1px;background:#5c5c5c"></div>
<div class="a" style="left:393px;top:392px;width:657px;height:261px;border:1px solid #6c6c6c;border-bottom-width:2px;border-bottom-color:#5f5f5f;border-radius:5px 5px 2px 2px"></div>
<div class="a" style="left:402px;top:382px;height:16px;line-height:16px;padding:0 3px;background:#535353;color:#cfcfcf;font-size:13px;white-space:nowrap">Quarter past the hour</div>
<div class="a" style="left:394px;top:399px;width:652px;height:249px;background:#525252;border-top:1px solid #686868;border-bottom:1px solid #3c3c3c"></div>
<div class="a gb dis" style="left:410px;top:413px;width:73px;height:23px"><svg class="a" style="left:15px;top:4px" width="16" height="16" viewBox="0 0 16 16" shape-rendering="crispEdges"><path d="M1.500 1.500h13v10h-13z" fill="none" stroke="#e8e8e8" stroke-width="1.4"/><rect x="4" y="4" width="8" height="5" fill="#999" stroke="#e8e8e8"/><path d="M1 14.500h3M6 14.500h8" stroke="#e8e8e8"/></svg><span class="a" style="left:35px;top:5px;color:#8e8e8e"><u>L</u>oad</span></div>
<div class="a gb dis" style="left:490px;top:413px;width:73px;height:23px"><svg class="a" style="left:8px;top:4px" width="16" height="16" viewBox="0 0 16 16" shape-rendering="crispEdges"><path d="M1.500 1.500h13v10h-13z" fill="none" stroke="#e8e8e8" stroke-width="1.4"/><rect x="4" y="4" width="8" height="5" fill="#999" stroke="#e8e8e8"/><path d="M1 14.500h3M6 14.500h8" stroke="#e8e8e8"/></svg><span class="a" style="left:28px;top:5px;color:#8e8e8e"><u>R</u>efresh</span></div>
<div class="a" style="left:406px;top:447px;width:161px;height:39px;border:1px solid #646464;border-radius:5px"></div>
<div class="a" style="left:419px;top:438px;height:15px;line-height:16px;padding:0 3px;background:#525252;color:#cfcfcf;font-size:13px"><u>M</u>ode</div>
<div class="a gb on" style="left:413px;top:455px;width:71px;height:24px"><span class="a" style="left:0;width:73px;text-align:center;top:5px;color:#000">Preview</span></div>
<div class="a gb" style="left:490px;top:455px;width:71px;height:24px"><svg class="a" style="left:6px;top:4px" width="17" height="16" viewBox="0 0 17 16"><rect width="17" height="16" fill="#a8a8a8"/><path d="M1 5v-4h4M12 1h4v4M16 11v4h-4M5 15h-4v-4" fill="none" stroke="#eee" stroke-width="2"/><circle cx="8.500" cy="8" r="3" fill="#e0e0e0"/><path d="M4 4l2 2M13 4l-2 2M4 12l2-2M13 12l-2-2" stroke="#eee" stroke-width="1.500"/></svg><span class="a" style="left:27px;top:6px;color:#000;letter-spacing:-.5px">I-Prompt</span></div>
<div class="a" style="left:415px;top:500px;width:144px;height:22px;background:#3a3a3a"><div class="a" style="left:1px;top:1px;width:125px;height:20px;background:#fff"></div><span class="a" style="left:1px;top:3px;color:#000;font-size:13.500px;letter-spacing:-.55px">00:00:00</span><div class="a sbb" style="left:127px;top:2px;width:15px;height:8px"><i class="up s"></i></div><div class="a sbb" style="left:127px;top:12px;width:15px;height:8px"><i class="dn s"></i></div></div>
<div class="a" style="left:415px;top:528px;width:144px;height:22px;background:#3a3a3a"><div class="a" style="left:1px;top:1px;width:125px;height:20px;background:#fff"></div><span class="a" style="left:1px;top:3px;color:#000;font-size:13.500px;letter-spacing:-.55px">00:00:00</span><div class="a sbb" style="left:127px;top:2px;width:15px;height:8px"><i class="up s"></i></div><div class="a sbb" style="left:127px;top:12px;width:15px;height:8px"><i class="dn s"></i></div></div>
<div class="a" style="left:406px;top:525px;color:#d8d8d8;font-size:13px">In</div>
<div class="a" style="left:406px;top:553px;height:8px;overflow:hidden;color:#d8d8d8;font-size:13px">Out:</div>
<div class="a" style="left:406px;top:562px;width:162px;height:54px;background:#525252;border:2px solid;border-color:#3a3a3a #686868 #686868 #3a3a3a"></div>
<div class="a" style="left:412px;top:566px;color:#fff;font-weight:bold;font-size:13px;letter-spacing:.2px">After Out:</div>
<div class="a" style="left:406px;width:162px;text-align:center;top:585px;color:#fff;font-size:24px;line-height:28px;letter-spacing:.55px;-webkit-text-stroke:.6px #fff">12:53.32</div>
<div class="a" style="left:580px;top:400px;width:465px;height:247px;background:#fff;border-top:1px solid #3a3a3a;border-left:2px solid #363636"></div>
<svg class="a" style="left:585px;top:406px" width="11" height="12" viewBox="0 0 11 12" shape-rendering="crispEdges"><path d="M0.500 0.500h6l3 3v8h-9z" fill="#fff" stroke="#000"/><path d="M6.500 0.500v3h3" fill="none" stroke="#000"/><path d="M2 3h3M2 5h6M2 7h6M2 9h6" stroke="#000"/></svg>
<div class="a" style="left:600px;top:401px;height:20px;line-height:20px;font-size:14px;letter-spacing:-.4px;color:#000;white-space:nowrap">documentation</div>
<svg class="a" style="left:585px;top:426px" width="11" height="12" viewBox="0 0 11 12" shape-rendering="crispEdges"><path d="M0.500 0.500h6l3 3v8h-9z" fill="#fff" stroke="#000"/><path d="M6.500 0.500v3h3" fill="none" stroke="#000"/><path d="M2 3h3M2 5h6M2 7h6M2 9h6" stroke="#000"/></svg>
<div class="a" style="left:600px;top:421px;height:20px;line-height:20px;font-size:14px;letter-spacing:-.4px;color:#000;white-space:nowrap">Stun Gun</div>
<svg class="a" style="left:585px;top:446px" width="11" height="12" viewBox="0 0 11 12" shape-rendering="crispEdges"><path d="M0.500 0.500h6l3 3v8h-9z" fill="#fff" stroke="#000"/><path d="M6.500 0.500v3h3" fill="none" stroke="#000"/><path d="M2 3h3M2 5h6M2 7h6M2 9h6" stroke="#000"/></svg>
<div class="a" style="left:600px;top:441px;height:20px;line-height:20px;font-size:14px;letter-spacing:-.4px;color:#000;white-space:nowrap">A new story</div>
<svg class="a" style="left:585px;top:466px" width="11" height="12" viewBox="0 0 11 12" shape-rendering="crispEdges"><path d="M0.500 0.500h6l3 3v8h-9z" fill="#fff" stroke="#000"/><path d="M6.500 0.500v3h3" fill="none" stroke="#000"/><path d="M2 3h3M2 5h6M2 7h6M2 9h6" stroke="#000"/></svg>
<div class="a" style="left:600px;top:461px;height:20px;line-height:20px;font-size:14px;letter-spacing:-.4px;color:#000;white-space:nowrap">NewsRoom 4</div>
<svg class="a" style="left:582px;top:483px" width="17" height="17" viewBox="0 0 17 17"><path d="M0.500 3.500l2-3 1.500 2.500M1.500 3.500l4.500 2.500" fill="none" stroke="#000" stroke-width="1"/><rect x="1" y="5.500" width="9.500" height="8" fill="#b8b8b8" stroke="#000"/><rect x="7" y="6" width="2" height="7" fill="#e4e4e4"/><path d="M2.500 8.500h4" stroke="#000" stroke-width="1.200"/><path d="M2.500 10h4" stroke="#eee"/><rect x="2" y="12" width="1.500" height="1.500" fill="#f00"/><rect x="4" y="12" width="1.500" height="1.500" fill="#0c0"/><path d="M10.500 8h1.500l3-2h1v8h-1l-3-2h-1.500z" fill="#c0c0c0" stroke="#000"/><rect x="11" y="8.500" width="1.500" height="3" fill="#000"/><path d="M6 15h8" stroke="#000" stroke-width="2"/><path d="M2 14.300h6" stroke="#000" stroke-width="1.400"/></svg>
<div class="a" style="left:600px;top:481px;height:20px;line-height:20px;font-size:14px;letter-spacing:-.4px;color:#000;white-space:nowrap">Big Foot Software</div>
<div class="a" style="left:582px;top:501px;width:463px;height:20px;background:#0078d7"></div>
<svg class="a" style="left:585px;top:506px" width="11" height="12" viewBox="0 0 11 12" shape-rendering="crispEdges"><path d="M0.500 0.500h6l3 3v8h-9z" fill="#fff" stroke="#000"/><path d="M6.500 0.500v3h3" fill="none" stroke="#000"/><path d="M2 3h3M2 5h6M2 7h6M2 9h6" stroke="#000"/></svg>
<div class="a" style="left:600px;top:501px;height:20px;line-height:20px;font-size:14px;letter-spacing:-.4px;color:#fff;white-space:nowrap">Wall-St - Noon</div>
<svg class="a" style="left:585px;top:526px" width="11" height="12" viewBox="0 0 11 12" shape-rendering="crispEdges"><path d="M0.500 0.500h6l3 3v8h-9z" fill="#fff" stroke="#000"/><path d="M6.500 0.500v3h3" fill="none" stroke="#000"/><path d="M2 3h3M2 5h6M2 7h6M2 9h6" stroke="#000"/></svg>
<div class="a" style="left:600px;top:521px;height:20px;line-height:20px;font-size:14px;letter-spacing:-.4px;color:#000;white-space:nowrap">Air Bus</div>
<svg class="a" style="left:585px;top:546px" width="11" height="12" viewBox="0 0 11 12" shape-rendering="crispEdges"><path d="M0.500 0.500h6l3 3v8h-9z" fill="#fff" stroke="#000"/><path d="M6.500 0.500v3h3" fill="none" stroke="#000"/><path d="M2 3h3M2 5h6M2 7h6M2 9h6" stroke="#000"/></svg>
<div class="a" style="left:600px;top:541px;height:20px;line-height:20px;font-size:14px;letter-spacing:-.4px;color:#000;white-space:nowrap">sniper caught</div>
<svg class="a" style="left:585px;top:566px" width="11" height="12" viewBox="0 0 11 12" shape-rendering="crispEdges"><path d="M0.500 0.500h6l3 3v8h-9z" fill="#fff" stroke="#000"/><path d="M6.500 0.500v3h3" fill="none" stroke="#000"/><path d="M2 3h3M2 5h6M2 7h6M2 9h6" stroke="#000"/></svg>
<div class="a" style="left:600px;top:561px;height:20px;line-height:20px;font-size:14px;letter-spacing:-.4px;color:#000;white-space:nowrap">Wish List</div>
<svg class="a" style="left:585px;top:586px" width="11" height="12" viewBox="0 0 11 12" shape-rendering="crispEdges"><path d="M0.500 0.500h6l3 3v8h-9z" fill="#fff" stroke="#000"/><path d="M6.500 0.500v3h3" fill="none" stroke="#000"/><path d="M2 3h3M2 5h6M2 7h6M2 9h6" stroke="#000"/></svg>
<div class="a" style="left:600px;top:581px;height:20px;line-height:20px;font-size:14px;letter-spacing:-.4px;color:#000;white-space:nowrap">Wine Growers Sue</div>
<svg class="a" style="left:585px;top:606px" width="11" height="12" viewBox="0 0 11 12" shape-rendering="crispEdges"><path d="M0.500 0.500h6l3 3v8h-9z" fill="#fff" stroke="#000"/><path d="M6.500 0.500v3h3" fill="none" stroke="#000"/><path d="M2 3h3M2 5h6M2 7h6M2 9h6" stroke="#000"/></svg>
<div class="a" style="left:600px;top:601px;height:20px;line-height:20px;font-size:14px;letter-spacing:-.4px;color:#000;white-space:nowrap">strike force</div>
<svg class="a" style="left:585px;top:626px" width="11" height="12" viewBox="0 0 11 12" shape-rendering="crispEdges"><path d="M0.500 0.500h6l3 3v8h-9z" fill="#fff" stroke="#000"/><path d="M6.500 0.500v3h3" fill="none" stroke="#000"/><path d="M2 3h3M2 5h6M2 7h6M2 9h6" stroke="#000"/></svg>
<div class="a" style="left:600px;top:621px;height:20px;line-height:20px;font-size:14px;letter-spacing:-.4px;color:#000;white-space:nowrap">PGA Golf</div>
<div class="a" style="left:1051px;top:441px;width:21px;height:57px;background:#565656;border:1px solid #707070;border-left:none;border-radius:0 5px 5px 0"></div>
<div class="a vt" style="left:1054px;top:382px;letter-spacing:-.65px">Selected</div>
<div class="a vt" style="left:1054px;top:447px;letter-spacing:-.5px">Promter</div>
<div class="a" style="left:7px;top:77px;width:1070px;height:582px;border:1px solid #3c3c3c;pointer-events:none"></div>
<div class="a" style="left:8px;top:78px;width:1068px;height:580px;border:1px solid #606060;pointer-events:none"></div>
<div class="a" id="stat" style="left:7px;top:659px;width:1070px;height:20px;background:linear-gradient(#464a58 0,#3b3e4a 7.500px,#2e2e2e 8px,#303030 13px,#3b3b3b 20px)">
<span class="a" style="left:9.5px;top:4px;letter-spacing:-0.10px">Position:</span>
<span class="a" style="left:63.5px;top:4px;letter-spacing:-0.10px">2 of 16</span>
<span class="a" style="left:124.5px;top:4px;letter-spacing:-0.13px">Totals:&nbsp; Words</span>
<span class="a" style="left:213.5px;top:4px;letter-spacing:-0.42px">2489</span>
<span class="a" style="left:268.5px;top:4px;letter-spacing:-0.28px">Read Time</span>
<span class="a" style="left:333.5px;top:4px;letter-spacing:-0.50px">0:20:44</span>
<span class="a" style="left:393.5px;top:4px;letter-spacing:-0.31px">Extra Time</span>
<span class="a" style="left:457.5px;top:4px;letter-spacing:-0.50px">0:00:00</span>
<span class="a" style="left:512.5px;top:4px;letter-spacing:0.00px">Duration</span>
<span class="a" style="left:567.5px;top:4px;letter-spacing:-0.50px">0:20:44</span>
<span class="a" style="left:627.0px;top:4px;letter-spacing:-0.46px">Over: 0:20:44</span>
<i class="a" style="left:54px;top:2px;width:1px;height:17px;background:linear-gradient(90deg,#585858,#4a4a4a)"></i>
<i class="a" style="left:104px;top:2px;width:1px;height:17px;background:linear-gradient(90deg,#585858,#4a4a4a)"></i>
<i class="a" style="left:198px;top:2px;width:1px;height:17px;background:linear-gradient(90deg,#585858,#4a4a4a)"></i>
<i class="a" style="left:248px;top:2px;width:1px;height:17px;background:linear-gradient(90deg,#585858,#4a4a4a)"></i>
<i class="a" style="left:324px;top:2px;width:1px;height:17px;background:linear-gradient(90deg,#585858,#4a4a4a)"></i>
<i class="a" style="left:374px;top:2px;width:1px;height:17px;background:linear-gradient(90deg,#585858,#4a4a4a)"></i>
<i class="a" style="left:448px;top:2px;width:1px;height:17px;background:linear-gradient(90deg,#585858,#4a4a4a)"></i>
<i class="a" style="left:498px;top:2px;width:1px;height:17px;background:linear-gradient(90deg,#585858,#4a4a4a)"></i>
<i class="a" style="left:558px;top:2px;width:1px;height:17px;background:linear-gradient(90deg,#585858,#4a4a4a)"></i>
<i class="a" style="left:608px;top:2px;width:1px;height:17px;background:linear-gradient(90deg,#585858,#4a4a4a)"></i>
<i class="a" style="left:708px;top:2px;width:1px;height:17px;background:linear-gradient(90deg,#585858,#4a4a4a)"></i>
</div>
<i class="a" style="left:1070px;top:667px;width:2px;height:2px;background:#111"></i>
<i class="a" style="left:1066px;top:671px;width:2px;height:2px;background:#111"></i>
<i class="a" style="left:1070px;top:671px;width:2px;height:2px;background:#111"></i>
<i class="a" style="left:1062px;top:675px;width:2px;height:2px;background:#111"></i>
<i class="a" style="left:1066px;top:675px;width:2px;height:2px;background:#111"></i>
<i class="a" style="left:1070px;top:675px;width:2px;height:2px;background:#111"></i>
<div class="a" style="left:0;top:683px;width:1084px;height:3px;background:linear-gradient(#555,#3c3c3c)"></div>
</div>
</body></html>
